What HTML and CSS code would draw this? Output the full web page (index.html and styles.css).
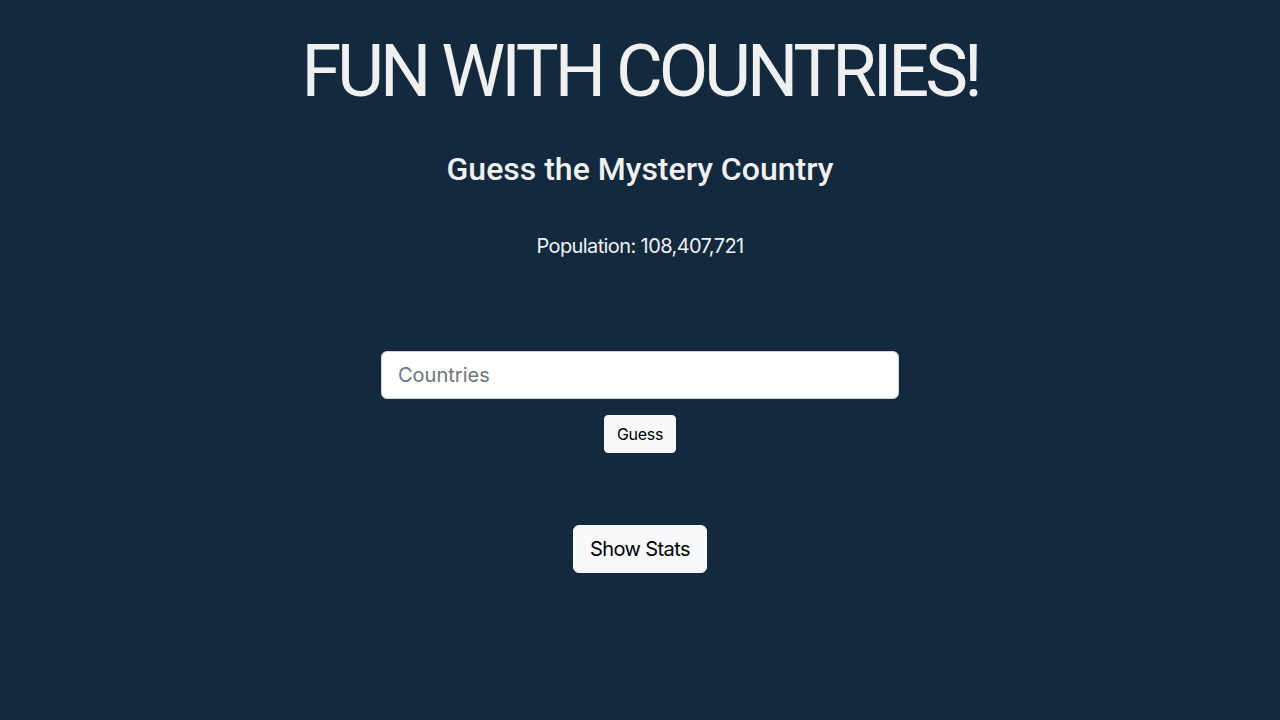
FILE: index.html
```html
<!DOCTYPE html>
<html lang="en">
<head>
<meta charset="utf-8">
<title>Fun with Countries</title>
<link rel="stylesheet" href="styles.css">
</head>
<body>
<main class="page">
  <h1 class="title">FUN WITH COUNTRIES!</h1>
  <h2 class="subtitle">Guess the Mystery Country</h2>
  <p class="clue">Population: 108,407,721</p>
  <form class="guess-form">
    <input class="country-input" type="text" placeholder="Countries">
    <button class="btn btn-sm" type="button">Guess</button>
  </form>
  <button class="btn btn-lg stats-btn" type="button">Show Stats</button>
</main>
</body>
</html>
```
FILE: styles.css
```css
html, body {
  margin: 0;
  padding: 0;
  height: 100%;
}
body {
  background: #132a3e;
  color: #f0f0f0;
  font-family: Inter, "Noto Sans", sans-serif;
}
.page {
  display: flex;
  flex-direction: column;
  align-items: center;
  text-align: center;
}
.title {
  margin: 29px 0 0;
  font-family: Roboto, Inter, sans-serif;
  font-size: 72px;
  font-weight: 400;
  line-height: 1.2;
  letter-spacing: -4px;
}
.subtitle {
  margin: 35px 0 0;
  font-family: Roboto, Inter, sans-serif;
  font-size: 32px;
  font-weight: 500;
  line-height: 1.2;
  letter-spacing: 0;
}
.clue {
  margin: 42px 0 0;
  font-size: 20px;
  line-height: 30px;
  letter-spacing: -0.6px;
}
.guess-form {
  margin-top: 90px;
  display: flex;
  flex-direction: column;
  align-items: center;
  gap: 16px;
}
.country-input {
  box-sizing: border-box;
  width: 518px;
  height: 48px;
  padding: 8px 16px;
  font-family: inherit;
  font-size: 20px;
  color: #212529;
  background: #fff;
  border: 1px solid #ced4da;
  border-radius: 6px;
  outline: none;
}
.country-input::placeholder {
  color: #6c757d;
}
.btn {
  box-sizing: border-box;
  font-family: inherit;
  color: #000;
  background: #f8f9fa;
  border: 1px solid #f8f9fa;
  cursor: pointer;
}
.btn-sm {
  height: 38px;
  padding: 0 12px;
  font-size: 16px;
  letter-spacing: -0.3px;
  border-radius: 4px;
}
.btn-lg {
  height: 48px;
  padding: 0 16px;
  font-size: 20px;
  letter-spacing: -0.6px;
  border-radius: 6px;
}
.stats-btn {
  margin-top: 72px;
}
```
